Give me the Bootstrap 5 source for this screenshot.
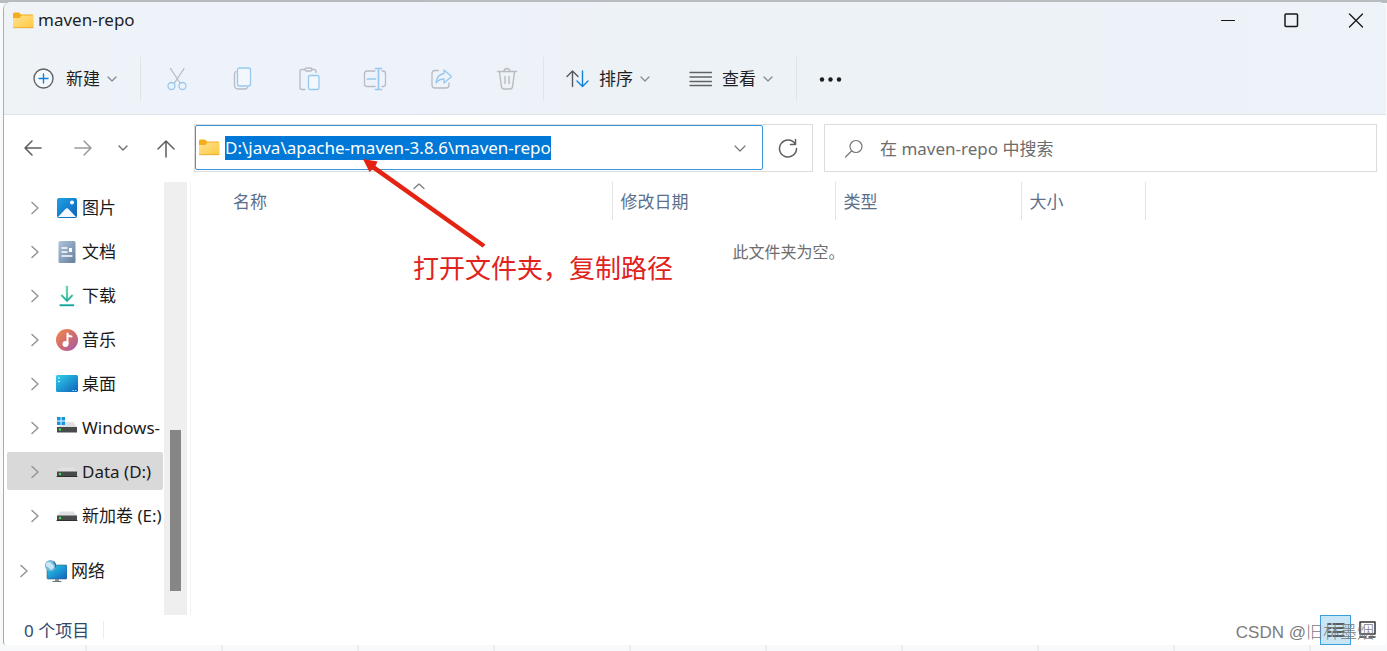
<!DOCTYPE html>
<html lang="zh-CN">
<head>
<meta charset="utf-8">
<meta name="viewport" content="width=device-width, initial-scale=1">
<title>maven-repo</title>
<link rel="stylesheet" href="https://cdn.jsdelivr.net/npm/bootstrap@5.3.0/dist/css/bootstrap.min.css">
<style>
  body { font-family: "Noto Sans", "Noto Sans CJK SC", sans-serif; font-size: 17px; line-height: 24px; color: #1f1f1f;
    background: linear-gradient(#b9bcbe, #b9bcbe) 0 0 / 100% 3px no-repeat,
      repeating-linear-gradient(90deg, #f7f9fa 0 85px, #eceeef 85px 87px, #f7f9fa 87px 136px); }
  .desk { padding: 2px 1px 6px 3px; }
  .explorer { border-left: 1px solid #a9adad; border-radius: 8px 8px 0 3px; background: #fff; }
  svg { display: block; flex: none; fill: none; stroke-linecap: round; stroke-linejoin: round; }
  button { background: none; border: 0; padding: 0; color: inherit; }
  .chrome { background: linear-gradient(90deg, #eff3f6, #eef3fb 12%, #eef2fa 30%, #edf2f6 50%, #edf2f8 80%, #edf3f8); border-bottom: 1px solid #dce2e7; }
  .titlebar { height: 36px; padding-left: 9px; }
  .win-btn { width: 60px; height: 36px; }
  .toolbar { height: 76px; padding: 5px 10px 0; }
  .tool { padding: 0 19px; gap: 9px; height: 44px; }
  .drop { margin: 0 1px 0 -2px; }
  .tool-icon { width: 66px; height: 44px; }
  .tool-rule { width: 1px; height: 44px; margin: 0 3px; background: #dfe4e8; flex: none; }
  .address-row { padding: 9px 9px 10px 4px; }
  .nav-btn { width: 50px; height: 48px; }
  .nav-btn.recent { width: 30px; }
  .nav-btn.up { width: 56px; }
  .address { flex: 1 1 619px; min-width: 0; height: 48px; border: 1px solid #dcdcdc; }
  .path { min-width: 0; height: 45px; border: 1px solid #3a96dd; padding: 0 16px 0 3px; border-radius: 2px; gap: 5px; }
  .path input, .search input { border: 0; outline: 0; background: none; padding: 0; min-width: 0; height: 24px; line-height: 24px; }
  .path input::selection { background: #0078d7; color: #fff; }
  .refresh { width: 49px; }
  .search { flex: 1 1 553px; min-width: 0; height: 48px; margin-left: 11px; border: 1px solid #dcdcdc; padding: 1px 19px 0; gap: 16px; }
  .search input::placeholder { color: #6d6d6d; opacity: 1; }
  .side { width: 160px; padding: 6px 1px 0 3px; gap: 6px; }
  .place { height: 38px; padding: 2px 0 0 24px; color: #1b1b1b; border-radius: 2px; white-space: nowrap; overflow: hidden; text-decoration: none; }
  .place .chev { margin-right: 17px; }
  .place span { margin-left: 4px; }
  .place.root { padding-left: 13px; margin-top: 11px; }
  .place.current { background: #d9d9d9; }
  .track { width: 23px; background: #efefef; }
  .thumb { flex: 161 1 0; width: 11px; background: #868686; margin-left: 6px; }
  .before { flex: 248 1 0; }
  .after { flex: 24 1 0; }
  .pane { margin-left: 3px; border-left: 1px solid #f3f3f3; min-width: 0; }
  .files { table-layout: fixed; width: 920px; margin: 0 0 0 34px; }
  .files th { height: 38px; padding: 2px 8px 0; font-weight: 400; color: #5c6f8a; border-right: 1px solid #e3e3e3; }
  .sort-mark { top: 0; left: 50%; margin-left: -5px; }
  .vacant { font-size: 16px; color: #6d6d6d; margin-top: 20px; }
  .callout { left: 172px; top: -24px; color: #e0231c; }
  .callout figcaption { font-size: 26px; line-height: 36px; padding-left: 50px; white-space: nowrap; margin-top: 2px; }
  .status { height: 30px; padding: 0 4px 0 20px; color: #33496b; }
  .status-text { padding-top: 2px; }
  .status-rule { width: 1px; height: 18px; margin-left: 14px; background: #ececec; }
  .view-btn { width: 31px; height: 30px; }
  .view-btn.active { background: #c8e6f6; border: 1px solid #3a9fdc; }
  .watermark { right: 12px; bottom: 0; font-size: 17px; color: #7c7c7c; font-family: "Liberation Sans", "Noto Sans CJK SC", sans-serif; font-weight: 300; pointer-events: none; }
</style>
</head>
<body>
<svg width="0" height="0" class="position-absolute" aria-hidden="true">
  <defs>
    <linearGradient id="gFolder" x2="1" y2="1"><stop stop-color="#ffe293"/><stop offset="1" stop-color="#fdc83f"/></linearGradient>
    <linearGradient id="gBlue" x2="1" y2="1"><stop stop-color="#1fa2e4"/><stop offset="1" stop-color="#0b62b8"/></linearGradient>
    <linearGradient id="gDoc" x2="1" y2="1"><stop stop-color="#afc4dc"/><stop offset="1" stop-color="#647f9c"/></linearGradient>
    <linearGradient id="gDown" x2="0" y2="1"><stop stop-color="#45ce8c"/><stop offset="1" stop-color="#10a59b"/></linearGradient>
    <linearGradient id="gMusic" x2="1" y2="1"><stop stop-color="#f18a49"/><stop offset=".55" stop-color="#cd6a72"/><stop offset="1" stop-color="#9d5cb8"/></linearGradient>
    <linearGradient id="gDesk" x2="1" y2="1"><stop stop-color="#30d0ea"/><stop offset="1" stop-color="#0d61bb"/></linearGradient>
    <symbol id="folder" viewBox="0 0 21 17"><path d="M0 2Q0 0.500 1.500 .5H6L8 2.500H20V7H0z" fill="#f5ad1c"/><path d="M0 6H6.500L8.500 3.500H20Q20.500 3.500 20.500 4V15Q20.500 16 19.500 16H1Q0 16 0 15z" fill="url(#gFolder)"/><path d="M.5 15.700H20" stroke="#e5a42b" stroke-width=".8"/></symbol>
    <symbol id="down" viewBox="0 0 10 10"><path d="M1 3l4 4 4-4" stroke="#868a8d" stroke-width="1.200"/></symbol>
    <symbol id="right" viewBox="0 0 8 14"><path d="M1 1.500L7 7 1 12.500" stroke="#949494" stroke-width="1.500"/></symbol>
    <symbol id="drive" viewBox="0 0 22 22"><path d="M4.500 6.500H17.500L21 11H1z" fill="#dfe1e3"/><path d="M1 10.500H21V16H1z" fill="#484b4b"/><path d="M1 15.500H21" stroke="#2e3030"/><circle cx="4" cy="13" r="1.200" fill="#38e746"/></symbol>
  </defs>
</svg>
<div class="desk vh-100 d-flex flex-column">
<div class="explorer flex-grow-1 d-flex flex-column position-relative overflow-hidden">
  <header class="chrome">
    <div class="titlebar d-flex align-items-center">
      <svg width="21" height="17"><use href="#folder"/></svg>
      <span class="ms-1">maven-repo</span>
      <div class="ms-auto d-flex gap-1">
        <button class="win-btn d-flex align-items-center justify-content-center" aria-label="最小化"><svg width="16" height="16" stroke="#171717" stroke-width="1.200"><path d="M1.500 8.500h13"/></svg></button>
        <button class="win-btn d-flex align-items-center justify-content-center" aria-label="最大化"><svg width="16" height="16" stroke="#171717" stroke-width="1.500"><rect x="1" y="2" width="12.500" height="12.500" rx="1"/></svg></button>
        <button class="win-btn d-flex align-items-center justify-content-center" aria-label="关闭"><svg width="16" height="16" stroke="#171717" stroke-width="1.300"><path d="M1.500 2l13 13M14.500 2l-13 13"/></svg></button>
      </div>
    </div>
    <div class="toolbar d-flex align-items-center">
      <button class="tool d-flex align-items-center"><svg width="24" height="24"><circle cx="10.500" cy="11.500" r="9.500" fill="#f7fafc" stroke="#606468" stroke-width="1.400"/><path d="M10.500 7v9M6 11.500h9" stroke="#1181d5" stroke-width="1.400"/></svg>新建<svg class="drop" width="10" height="10"><use href="#down"/></svg></button>
      <span class="tool-rule"></span>
      <button class="tool-icon d-flex align-items-center justify-content-center" aria-label="剪切" disabled><svg width="24" height="24" stroke-width="1.300"><path d="M5.500 1.500L15 16M19 1.500L9.500 16" stroke="#b8bcc0"/><circle cx="6.500" cy="19" r="3.500" stroke="#96c9ed"/><circle cx="17.500" cy="19" r="3.500" stroke="#96c9ed"/></svg></button>
      <button class="tool-icon d-flex align-items-center justify-content-center" aria-label="复制" disabled><svg width="24" height="24" stroke-width="1.300"><path d="M5 4.500Q3.500 5.500 3.500 7.500V18Q3.500 22 7.500 22H14Q16 22 16.500 20.500" stroke="#b8bcc0"/><rect x="6.500" y="1" width="13" height="18" rx="2" stroke="#96c9ed" fill="#f2f7fd"/></svg></button>
      <button class="tool-icon d-flex align-items-center justify-content-center" aria-label="粘贴" disabled><svg width="24" height="24" stroke-width="1.300"><path d="M8 2.500H5Q3 2.500 3 4.500V20.500Q3 22.500 5 22.500H8M15 2.500H17Q19 2.500 19 4.500V5.500" stroke="#b8bcc0"/><rect x="8" y="1" width="7" height="3" rx="1.500" stroke="#b8bcc0"/><rect x="11.500" y="8.500" width="10.500" height="14" rx="1.500" stroke="#96c9ed" fill="#f2f7fd"/></svg></button>
      <button class="tool-icon d-flex align-items-center justify-content-center" aria-label="重命名" disabled><svg width="24" height="24" stroke-width="1.300"><path d="M12 4H4Q1.500 4 1.500 6.500V17Q1.500 19.500 4 19.500H12M19 4H20Q22.500 4 22.500 6.500V17Q22.500 19.500 20 19.500H19" stroke="#b8bcc0"/><path d="M12.500 1.500h6M12.500 22.500h6M15.500 1.500v21M4.500 12h8" stroke="#96c9ed" stroke-width="1.700"/></svg></button>
      <button class="tool-icon d-flex align-items-center justify-content-center" aria-label="共享" disabled><svg width="24" height="24" stroke-width="1.300"><path d="M9.500 3.500H6Q3 3.500 3 6.500V18Q3 21 6 21H17Q20 21 20 18V16" stroke="#b8bcc0"/><path d="M15 3L22.500 9.500 15 16V12Q10 12 7 16Q8 7.500 15 6.500z" stroke="#96c9ed"/></svg></button>
      <button class="tool-icon d-flex align-items-center justify-content-center" aria-label="删除" disabled><svg width="24" height="24" stroke="#b8bcc0" stroke-width="1.400"><path d="M2.500 4.500h19M4.500 5L6.500 20Q7 22 9 22H15Q17 22 17.500 20L19.500 5M9 4Q9.500 1.500 12 1.500T15 4M10 9.500v7M14 9.500v7"/></svg></button>
      <span class="tool-rule"></span>
      <button class="tool d-flex align-items-center"><svg width="24" height="24" stroke-width="1.400"><path d="M6.500 19.500V4M1 9.500L6.500 4 12 9.500" stroke="#55595c"/><path d="M16.500 4V19.500M11 14L16.500 19.500 22 14" stroke="#1181d5"/></svg>排序<svg class="drop" width="10" height="10"><use href="#down"/></svg></button>
      <button class="tool d-flex align-items-center"><svg width="24" height="24" stroke="#606366" stroke-width="1.300"><path d="M1 5.500h21.500M1 10h21.500M1 14.500h21.500M1 18.500h21.500"/></svg>查看<svg class="drop" width="10" height="10"><use href="#down"/></svg></button>
      <span class="tool-rule"></span>
      <button class="tool d-flex align-items-center" aria-label="更多"><svg width="24" height="24"><g fill="#1d1d1d"><circle cx="3" cy="12.500" r="2.200"/><circle cx="11.500" cy="12.500" r="2.200"/><circle cx="20" cy="12.500" r="2.200"/></g></svg></button>
    </div>
  </header>

  <div class="address-row d-flex align-items-center">
    <button class="nav-btn d-flex align-items-center justify-content-center" aria-label="后退"><svg width="20" height="20" stroke="#5d5d5d" stroke-width="1.500"><path d="M18 10H2M9 3L2 10l7 7"/></svg></button>
    <button class="nav-btn d-flex align-items-center justify-content-center" aria-label="前进"><svg width="20" height="20" stroke="#9b9b9b" stroke-width="1.500"><path d="M2 10h16M11 3l7 7-7 7"/></svg></button>
    <button class="nav-btn recent d-flex align-items-center justify-content-center" aria-label="最近浏览的位置"><svg width="12" height="12"><path d="M2 4l4 4 4-4" stroke="#6f6f6f" stroke-width="1.400"/></svg></button>
    <button class="nav-btn up d-flex align-items-center justify-content-center" aria-label="上移"><svg width="20" height="20" stroke="#5d5d5d" stroke-width="1.500"><path d="M10 19V3M2 11l8-8 8 8"/></svg></button>
    <div class="address d-flex">
      <div class="path flex-grow-1 d-flex align-items-center">
        <svg width="21" height="17"><use href="#folder"/></svg>
        <input id="path" class="flex-grow-1" type="text" aria-label="地址" value="D:\java\apache-maven-3.8.6\maven-repo" spellcheck="false">
        <button aria-label="以前的位置"><svg width="12" height="12"><path d="M1 4l5 5 5-5" stroke="#777" stroke-width="1.200"/></svg></button>
      </div>
      <button class="refresh d-flex align-items-center justify-content-center" aria-label="刷新"><svg width="22" height="22" stroke="#606060" stroke-width="1.500"><path d="M18.500 7.500A8.500 8.500 0 1 0 19.500 11.500M18.500 2.500V7.500H13.500"/></svg></button>
    </div>
    <label class="search d-flex align-items-center">
      <svg width="20" height="20" stroke="#777" stroke-width="1.200"><circle cx="12" cy="7.500" r="6"/><path d="M7.500 12L1.500 18"/></svg>
      <input class="flex-grow-1" type="search" placeholder="在 maven-repo 中搜索" aria-label="搜索">
    </label>
  </div>

  <div class="flex-grow-1 d-flex">
    <nav class="side d-flex flex-column flex-shrink-0">
      <a href="#" class="place d-flex align-items-center"><svg class="chev" width="8" height="14"><use href="#right"/></svg><svg width="22" height="22"><rect x="1" y="1" width="20" height="20" rx="2" fill="url(#gBlue)"/><path d="M2 20L9.500 12Q11 10.500 12.500 12L20 20z" fill="#f4faff"/><circle cx="16" cy="5.500" r="2" fill="#fff"/></svg><span>图片</span></a>
      <a href="#" class="place d-flex align-items-center"><svg class="chev" width="8" height="14"><use href="#right"/></svg><svg width="22" height="22"><rect x="2.500" y="0" width="17" height="22" rx="1.500" fill="url(#gDoc)"/><path d="M6 7h5M6 11h5M6 15h10" stroke="#fff" stroke-width="1.300"/><rect x="13" y="7" width="3" height="4" fill="#fff"/></svg><span>文档</span></a>
      <a href="#" class="place d-flex align-items-center"><svg class="chev" width="8" height="14"><use href="#right"/></svg><svg width="22" height="22"><path d="M10.300 1H11.700V14L16 9.500 17 10.700 11 17 5 10.700 6 9.500 10.300 14zM4 19.500H18V21H4z" fill="url(#gDown)" stroke="url(#gDown)" stroke-width=".4"/></svg><span>下载</span></a>
      <a href="#" class="place d-flex align-items-center"><svg class="chev" width="8" height="14"><use href="#right"/></svg><svg width="22" height="22"><circle cx="11" cy="11" r="11" fill="url(#gMusic)"/><path d="M11.500 4.500V14.500M11.500 5Q12 7.500 15.500 7.500" stroke="#fff" stroke-width="2"/><circle cx="9.500" cy="15" r="3" fill="#fff"/></svg><span>音乐</span></a>
      <a href="#" class="place d-flex align-items-center"><svg class="chev" width="8" height="14"><use href="#right"/></svg><svg width="22" height="22"><rect x="0" y="2" width="22" height="17" rx="1.500" fill="url(#gDesk)"/><path d="M3 5v0M3 8.500v0" stroke="#fff" stroke-width="1.600"/><path d="M17 17.500h.5M19.500 17.500h.5" stroke="#cde8fa"/></svg><span>桌面</span></a>
      <a href="#" class="place d-flex align-items-center"><svg class="chev" width="8" height="14"><use href="#right"/></svg><svg width="22" height="22"><path d="M10 5H17.500L21 10H1z" fill="#dfe1e3"/><path d="M1 10H21V15.500H1z" fill="#484b4b"/><circle cx="4" cy="12.500" r="1.200" fill="#38e746"/><path d="M1 0H4.600V3.600H1zM5.500 0H9V3.600H5.500zM1 4.500H4.600V8H1zM5.500 4.500H9V8H5.500z" fill="#1594df"/></svg><span>Windows-</span></a>
      <a href="#" class="place current d-flex align-items-center" aria-current="page"><svg class="chev" width="8" height="14"><use href="#right"/></svg><svg width="22" height="22"><use href="#drive"/></svg><span>Data (D:)</span></a>
      <a href="#" class="place d-flex align-items-center"><svg class="chev" width="8" height="14"><use href="#right"/></svg><svg width="22" height="22"><use href="#drive"/></svg><span>新加卷 (E:)</span></a>
      <a href="#" class="place root d-flex align-items-center"><svg class="chev" width="8" height="14"><use href="#right"/></svg><svg width="22" height="22"><rect x="2" y="5" width="20" height="14" rx="1" fill="url(#gDesk)" stroke="#376079" stroke-width=".6"/><path d="M10 19h4v2h-4z" fill="#8b9398"/><path d="M8 21.500h8" stroke="#69747a"/><circle cx="5.500" cy="5.500" r="5.500" fill="#76b8d8"/><path d="M1 3Q4 1 6 3T9 6 6 10Q3 7 1 6z" fill="#c7e7f3"/><path d="M9 2Q11 4 10.500 7" stroke="#246d9d" stroke-width="1.200"/></svg><span>网络</span></a>
    </nav>
    <div class="track d-flex flex-column flex-shrink-0"><div class="before"></div><div class="thumb"></div><div class="after"></div></div>
    <main class="pane flex-grow-1 position-relative">
      <table class="files">
        <colgroup><col style="width:387px"><col style="width:223px"><col style="width:186px"><col style="width:124px"></colgroup>
        <thead><tr>
          <th scope="col" class="position-relative">名称<svg class="sort-mark position-absolute" width="12" height="8"><path d="M1 6.500L6 2l5 4.500" stroke="#777" stroke-width="1.200"/></svg></th>
          <th scope="col">修改日期</th><th scope="col">类型</th><th scope="col">大小</th>
        </tr></thead>
      </table>
      <p class="vacant text-center mb-0">此文件夹为空。</p>
      <figure class="callout position-absolute m-0">
        <svg width="124" height="90"><path d="M0 1L14.500 3.500 12.500 8 122.500 86.500 119.500 89.500 9.500 11.500 6.500 14z" fill="#e42313"/></svg>
        <figcaption>打开文件夹，复制路径</figcaption>
      </figure>
    </main>
  </div>

  <footer class="status d-flex align-items-center">
    <span class="status-text">0 个项目</span><span class="status-rule"></span>
    <div class="ms-auto d-flex">
      <button class="view-btn active d-flex align-items-center justify-content-center" aria-label="详细信息"><svg width="18" height="18" stroke="#333" stroke-width="1.300"><path d="M1 3h3M6 3h11M1 7h3M6 7h11M1 11h3M6 11h11M1 15h3M6 15h11"/></svg></button>
      <button class="view-btn d-flex align-items-center justify-content-center" aria-label="大图标"><svg width="18" height="18" stroke="#333" stroke-width="1.500"><rect x="2" y="1" width="15" height="12"/><path d="M2 16h6M11 16h6"/></svg></button>
    </div>
  </footer>
  <div class="watermark position-absolute">CSDN @旧林墨烟</div>
</div>
</div>
<script src="https://cdn.jsdelivr.net/npm/bootstrap@5.3.0/dist/js/bootstrap.bundle.min.js"></script>
<script>
  // The address opens focused with its whole path selected.
  const path = document.getElementById('path');
  path.focus();
  path.select();
</script>
</body>
</html>
